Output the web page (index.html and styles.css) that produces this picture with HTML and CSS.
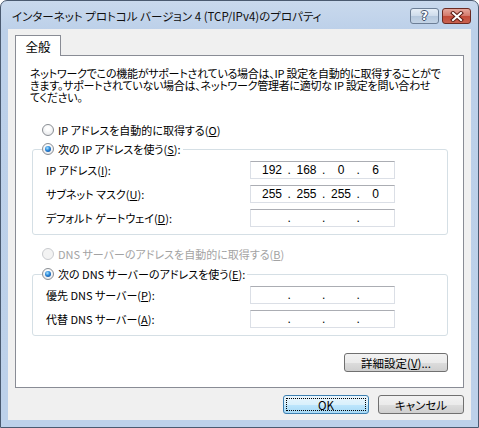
FILE: index.html
```html
<!DOCTYPE html>
<html lang="ja">
<head>
    <meta charset="UTF-8">
    <title>インターネット プロトコル バージョン 4 (TCP/IPv4)のプロパティ</title>
    <link rel="stylesheet" href="styles.css">
</head>
<body>
    <div class="window">
        <div class="titlebar">
            <span class="title">インターネット プロトコル バージョン 4 (TCP/IPv4)のプロパティ</span>
            <div class="caption-buttons">
                <div class="cap-btn help">?</div>
                <div class="cap-btn close">
                    <svg width="14" height="11" viewBox="0 0 14 11">
                        <path d="M3 2 L11 9 M11 2 L3 9" stroke="#5a1a12" stroke-width="4" stroke-linecap="square"/>
                        <path d="M3 2 L11 9 M11 2 L3 9" stroke="#fff" stroke-width="2" stroke-linecap="square"/>
                    </svg>
                </div>
            </div>
        </div>

        <div class="client">
            <div class="tabs">
                <div class="tab active">全般</div>
            </div>

            <div class="panel">
                <p class="desc">ネットワークでこの機能がサポートされている場合は、IP 設定を自動的に取得することがで<br>きます。サポートされていない場合は、ネットワーク管理者に適切な IP 設定を問い合わせ<br>てください。</p>

                <div class="radio-row auto-ip"><span class="radio"></span>IP アドレスを自動的に取得する(<u>O</u>)</div>

                <fieldset class="group group-ip">
                    <legend><span class="radio checked"></span>次の IP アドレスを使う(<u>S</u>):</legend>
                    <div class="field-row">
                        <span class="field-label">IP アドレス(<u>I</u>):</span>
                        <div class="ipbox"><span>192</span><i>.</i><span>168</span><i>.</i><span>0</span><i>.</i><span>6</span></div>
                    </div>
                    <div class="field-row">
                        <span class="field-label">サブネット マスク(<u>U</u>):</span>
                        <div class="ipbox"><span>255</span><i>.</i><span>255</span><i>.</i><span>255</span><i>.</i><span>0</span></div>
                    </div>
                    <div class="field-row">
                        <span class="field-label">デフォルト ゲートウェイ(<u>D</u>):</span>
                        <div class="ipbox"><span></span><i>.</i><span></span><i>.</i><span></span><i>.</i><span></span></div>
                    </div>
                </fieldset>

                <div class="radio-row auto-dns disabled"><span class="radio"></span>DNS サーバーのアドレスを自動的に取得する(<u>B</u>)</div>

                <fieldset class="group group-dns">
                    <legend><span class="radio checked"></span>次の DNS サーバーのアドレスを使う(<u>E</u>):</legend>
                    <div class="field-row">
                        <span class="field-label">優先 DNS サーバー(<u>P</u>):</span>
                        <div class="ipbox"><span></span><i>.</i><span></span><i>.</i><span></span><i>.</i><span></span></div>
                    </div>
                    <div class="field-row">
                        <span class="field-label">代替 DNS サーバー(<u>A</u>):</span>
                        <div class="ipbox"><span></span><i>.</i><span></span><i>.</i><span></span><i>.</i><span></span></div>
                    </div>
                </fieldset>

                <div class="advanced-row">
                    <button class="btn advanced">詳細設定(<u>V</u>)...</button>
                </div>
            </div>

            <div class="footer">
                <button class="btn default"><span class="focus-ring">OK</span></button>
                <button class="btn">キャンセル</button>
            </div>
        </div>
    </div>
</body>
</html>
```

FILE: styles.css
```css
* {
    box-sizing: border-box;
}
body {
    margin: 0;
    background: #ffffff;
    font-family: "Noto Sans CJK JP", "Noto Sans", sans-serif;
    font-size: 11px;
    font-feature-settings: "palt";
    color: #000;
}
.window {
    width: 479px;
    height: 428px;
    border: 1px solid #4a5a70;
    border-radius: 7px 7px 0 0;
    background: linear-gradient(to bottom, #c9d9ed 0%, #bcd0e9 30px, #bdd1ea 100%);
    padding: 0 7px 7px 7px;
    display: flex;
    flex-direction: column;
}
.titlebar {
    height: 28px;
    display: flex;
    align-items: center;
    justify-content: space-between;
}
.title {
    margin-left: 4px;
    margin-top: 2px;
    font-size: 11.5px;
    color: #101010;
    white-space: nowrap;
}
.caption-buttons {
    display: flex;
    gap: 3px;
    margin-top: 2px;
}
.cap-btn {
    width: 29px;
    height: 16px;
    border-radius: 3px;
    display: flex;
    align-items: center;
    justify-content: center;
}
.help {
    border: 1px solid #6c7e96;
    background: linear-gradient(to bottom, #e6eef7 0%, #cddbeb 50%, #b4c7dd 51%, #c4d4e6 100%);
    color: #fff;
    font-family: "DejaVu Sans", sans-serif;
    font-weight: bold;
    font-size: 12px;
    text-shadow: 1px 0 #41536b, -1px 0 #41536b, 0 1px #41536b, 0 -1px #41536b;
}
.close {
    border: 1px solid #6b2a22;
    background: linear-gradient(to bottom, #e6a79c 0%, #d3786a 50%, #c24a38 51%, #c9614f 100%);
}
.client {
    flex: 1;
    background: #f0f0f0;
    display: flex;
    flex-direction: column;
}
.tabs {
    display: flex;
    padding-left: 7px;
    margin-top: 6px;
}
.tab {
    width: 46px;
    height: 21px;
    border: 1px solid #898c95;
    border-bottom: none;
    background: #ffffff;
    margin-bottom: -1px;
    position: relative;
    z-index: 1;
    display: flex;
    align-items: center;
    justify-content: center;
    font-size: 12.5px;
}
.panel {
    margin: 0 7px;
    height: 333px;
    border: 1px solid #898c95;
    background: #ffffff;
    padding: 11px 0 0 14px;
}
.desc {
    margin: 0;
    line-height: 12px;
    white-space: nowrap;
    letter-spacing: -0.25px;
}
.radio-row {
    display: flex;
    align-items: center;
    height: 14px;
    white-space: nowrap;
}
.auto-ip {
    margin: 20px 0 0 12px;
}
.auto-dns {
    margin: 12px 0 0 12px;
}
.disabled {
    color: #a3a3a3;
}
.radio {
    width: 12px;
    height: 12px;
    border-radius: 50%;
    border: 1px solid #8a8e94;
    background: radial-gradient(circle at 50% 35%, #ffffff 20%, #e0e2e5 100%);
    margin-right: 4px;
    position: relative;
    flex-shrink: 0;
}
.radio.checked::after {
    content: "";
    position: absolute;
    top: 2px;
    left: 2px;
    width: 6px;
    height: 6px;
    border-radius: 50%;
    background: radial-gradient(circle at 40% 35%, #a8e4ff 0%, #2a86d8 45%, #0b3d86 100%);
}
.disabled .radio {
    border-color: #c9cbcf;
    background: #f3f3f3;
}
.group {
    margin: 0 15px 0 2px;
    border: 1px solid #d5dfe5;
    border-radius: 3px;
    padding: 5px 0 7px 13px;
    min-width: 0;
}
.group-ip {
    margin-top: 5px;
}
.group-dns {
    margin-top: 6px;
}
.group legend {
    display: flex;
    align-items: center;
    height: 14px;
    padding: 0 2px 0 0;
    margin-left: -4px;
    white-space: nowrap;
}
.field-row {
    display: flex;
    align-items: center;
    height: 18px;
    margin-bottom: 6px;
}
.field-row:last-child {
    margin-bottom: 0;
}
.field-label {
    width: 204px;
    white-space: nowrap;
}
.ipbox {
    width: 145px;
    height: 18px;
    border: 1px solid #dbdfe6;
    border-top-color: #abadb3;
    background: #ffffff;
    display: flex;
    align-items: center;
    padding-left: 6px;
    font-family: "Liberation Sans", sans-serif;
    font-size: 12px;
}
.ipbox span {
    width: 30px;
    text-align: center;
}
.ipbox i {
    font-style: normal;
    width: 4.5px;
    text-align: center;
}
.advanced-row {
    display: flex;
    justify-content: flex-end;
    margin: 17px 15px 0 0;
}
.btn {
    height: 19px;
    border: 1px solid #707070;
    border-radius: 3px;
    background: linear-gradient(to bottom, #f2f2f2 0%, #ebebeb 50%, #dddddd 51%, #cfcfcf 100%);
    font-family: "Noto Sans CJK JP", "Noto Sans", sans-serif;
    font-feature-settings: "palt";
    font-size: 11.5px;
    color: #000;
    padding: 0;
    display: flex;
    align-items: center;
    justify-content: center;
}
.advanced {
    width: 104px;
}
.footer {
    display: flex;
    justify-content: flex-end;
    gap: 9px;
    padding: 7px 7px 0 0;
}
.footer .btn {
    width: 86px;
}
.btn.default {
    border-color: #3c7fb1;
    background: linear-gradient(to bottom, #eaf6fd 0%, #d9f0fc 50%, #bee6fd 51%, #a7d9f5 100%);
    padding: 2px;
}
.focus-ring {
    width: 100%;
    height: 100%;
    border: 1px dotted #000;
    display: flex;
    align-items: center;
    justify-content: center;
}
```
